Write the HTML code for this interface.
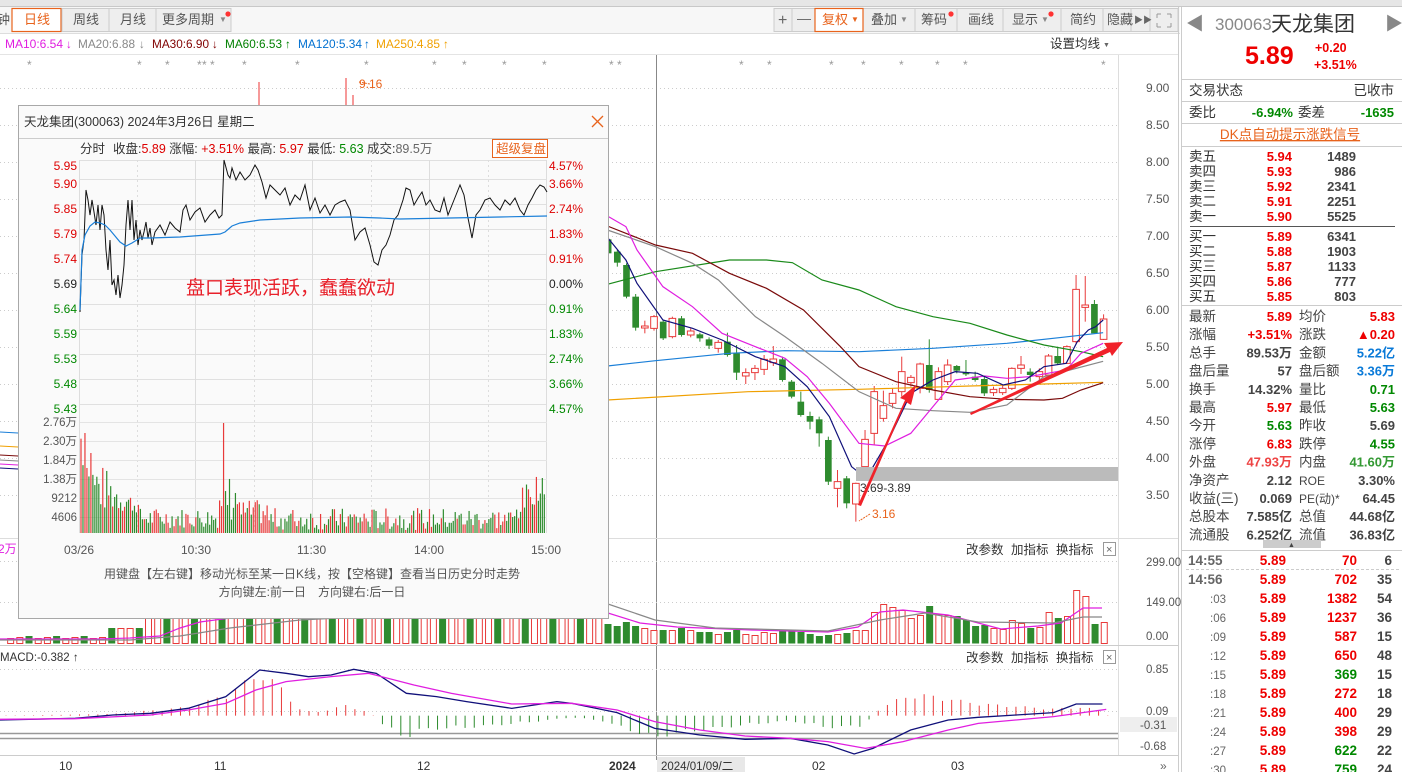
<!DOCTYPE html>
<html><head><meta charset="utf-8"><style>
html,body{margin:0;padding:0;background:#fff;width:1402px;height:772px;overflow:hidden}
svg text{font-family:"Liberation Sans","Noto Sans CJK SC",sans-serif}
</style></head><body>
<svg id="s" width="1402" height="772" viewBox="0 0 1402 772" xmlns="http://www.w3.org/2000/svg">
<rect width="1402" height="772" fill="#fff"/>
<rect x="0" y="0" width="1180" height="6" fill="#e6e6e6"/>
<rect x="1180" y="0" width="222" height="6" fill="#e6e6e6"/>
<line x1="0" y1="6.5" x2="1402" y2="6.5" stroke="#c8c8c8"/>
<rect x="0" y="7" width="1180" height="26" fill="#f7f7f7"/>
<line x1="0" y1="33.5" x2="1180" y2="33.5" stroke="#ddd"/>
<g font-size="13" fill="#555">
<text x="-3" y="24">钟</text>
<rect x="12" y="8.5" width="49" height="23" fill="#fff" stroke="#e8631c" stroke-width="1.2"/>
<text x="24" y="24" fill="#e8631c">日线</text>
<rect x="62" y="8.5" width="47" height="23" fill="#eee" stroke="#ccc"/><text x="73" y="24">周线</text>
<rect x="109" y="8.5" width="47" height="23" fill="#eee" stroke="#ccc"/><text x="120" y="24">月线</text>
<rect x="156" y="8.5" width="75" height="23" fill="#eee" stroke="#ccc"/><text x="162" y="24">更多周期</text>
<text x="219" y="22" font-size="8" fill="#888">▼</text><circle cx="228" cy="14" r="2.6" fill="#f33"/>
<rect x="774" y="8.5" width="357" height="23" fill="#eee" stroke="#ccc"/>
<text x="778" y="25" font-size="16" fill="#666">+</text><line x1="792" y1="9" x2="792" y2="31" stroke="#ccc"/>
<text x="797" y="23" font-size="14" fill="#666">—</text>
<rect x="815" y="8.5" width="48" height="23" fill="#fff" stroke="#e8631c" stroke-width="1.2"/>
<text x="822" y="24" fill="#e8631c">复权</text><text x="851" y="22" font-size="8" fill="#e8631c">▼</text>
<line x1="915" y1="9" x2="915" y2="31" stroke="#ccc"/><line x1="957" y1="9" x2="957" y2="31" stroke="#ccc"/>
<line x1="1003" y1="9" x2="1003" y2="31" stroke="#ccc"/><line x1="1061" y1="9" x2="1061" y2="31" stroke="#ccc"/>
<line x1="1103" y1="9" x2="1103" y2="31" stroke="#ccc"/>
<rect x="1131" y="8.5" width="47" height="23" fill="#eee" stroke="#ccc"/>
<line x1="1150" y1="9" x2="1150" y2="31" stroke="#ccc"/>
<text x="871" y="24">叠加</text><text x="900" y="22" font-size="8" fill="#888">▼</text>
<text x="921" y="24">筹码</text><circle cx="951" cy="14" r="2.6" fill="#f33"/>
<text x="968" y="24">画线</text>
<text x="1012" y="24">显示</text><text x="1041" y="22" font-size="8" fill="#888">▼</text><circle cx="1051" cy="14" r="2.6" fill="#f33"/>
<text x="1070" y="24">简约</text>
<text x="1107" y="24">隐藏</text><text x="1134" y="23" font-size="9" fill="#666">▶▶</text>
<g stroke="#999" stroke-width="1" fill="none"><path d="M1157 14h4M1157 14v4M1171 14h-4M1171 14v4M1157 27h4M1157 27v-4M1171 27h-4M1171 27v-4"/></g>
</g>
<g font-size="11.5" font-family="Liberation Mono">
<text x="5" y="48" fill="#e01ee0" textLength="58" lengthAdjust="spacingAndGlyphs">MA10:6.54</text><text x="66" y="48" fill="#e01ee0">↓</text>
<text x="78" y="48" fill="#888" textLength="57" lengthAdjust="spacingAndGlyphs">MA20:6.88</text><text x="139" y="48" fill="#888">↓</text>
<text x="152" y="48" fill="#800000" textLength="57" lengthAdjust="spacingAndGlyphs">MA30:6.90</text><text x="212" y="48" fill="#800000">↓</text>
<text x="225" y="48" fill="#008000" textLength="57" lengthAdjust="spacingAndGlyphs">MA60:6.53</text><text x="285" y="48" fill="#008000">↑</text>
<text x="298" y="48" fill="#0070d0" textLength="64" lengthAdjust="spacingAndGlyphs">MA120:5.34</text><text x="364" y="48" fill="#0070d0">↑</text>
<text x="376" y="48" fill="#f0a000" textLength="64" lengthAdjust="spacingAndGlyphs">MA250:4.85</text><text x="443" y="48" fill="#f0a000">↑</text>
</g>
<text x="1050" y="48" font-size="12.5" fill="#333">设置均线</text><text x="1103" y="47" font-size="7" fill="#666">▼</text>
<line x1="0" y1="54.5" x2="1178" y2="54.5" stroke="#e4e4e4"/>
<line x1="1118.5" y1="55" x2="1118.5" y2="540" stroke="#ddd"/>
<line x1="1178.5" y1="7" x2="1178.5" y2="772" stroke="#ccc"/>
<line x1="1181.5" y1="7" x2="1181.5" y2="772" stroke="#ccc"/>
<g id="pgrid" stroke="#ccc" stroke-dasharray="1,3"></g>
<g id="plabels" font-size="12" fill="#555" font-family="Liberation Mono"></g>
<g font-size="12" fill="#999" id="stars"></g>
<line x1="656.5" y1="55" x2="656.5" y2="760" stroke="#888"/>
<g id="main"></g>
<rect x="856" y="467" width="262" height="14" fill="#bbb"/>
<text x="860" y="492" font-size="12" fill="#333" font-family="Liberation Mono">3.69-3.89</text>
<text x="872" y="518" font-size="12" fill="#e8631c" font-family="Liberation Mono">3.16</text>
<path d="M870 514 L859 521" stroke="#e8631c" stroke-dasharray="2,1"/>
<path d="M359 82 L370 84" stroke="#e8631c" stroke-dasharray="2,1"/>
<text x="359" y="88" font-size="12" fill="#e8631c" font-family="Liberation Mono">9.16</text>
<line x1="346" y1="78" x2="346" y2="105" stroke="#e33"/><line x1="353" y1="95" x2="353" y2="105" stroke="#e33"/>
<line x1="259" y1="82" x2="259" y2="105" stroke="#e33"/>
<g fill="#f0222a">
<polygon points="858,505 861,506 906,402 911,405 916,385 900,398 905,400"/>
<polygon points="970,413 971,415 1110,352 1112,356 1123,342 1104,343 1107,348"/>
</g>
<line x1="0" y1="538.5" x2="1178" y2="538.5" stroke="#ddd"/>
<line x1="1118.5" y1="540" x2="1118.5" y2="645" stroke="#ddd"/>
<g font-size="12.5" fill="#333"><text x="966" y="554">改参数</text><text x="1011" y="554">加指标</text><text x="1056" y="554">换指标</text>
<text x="966" y="662">改参数</text><text x="1011" y="662">加指标</text><text x="1056" y="662">换指标</text></g>
<rect x="1103.5" y="542.5" width="12" height="13" fill="#fff" stroke="#999"/><text x="1106" y="553" font-size="11" fill="#666">×</text>
<rect x="1103.5" y="650.5" width="12" height="13" fill="#fff" stroke="#999"/><text x="1106" y="661" font-size="11" fill="#666">×</text>
<g stroke="#ccc" stroke-dasharray="1,3"><line x1="0" y1="561.5" x2="1118" y2="561.5"/><line x1="0" y1="602.5" x2="1118" y2="602.5"/></g>
<g font-size="11.5" fill="#555" font-family="Liberation Mono"><text x="1146" y="566">299.00</text><text x="1146" y="606">149.00</text><text x="1146" y="640">0.00</text></g>
<text x="-2" y="553" font-size="12" fill="#e01ee0">2万</text>
<g id="vol"></g>
<line x1="0" y1="645.5" x2="1178" y2="645.5" stroke="#ccc"/>
<line x1="1118.5" y1="646" x2="1118.5" y2="755" stroke="#ddd"/>
<text x="0" y="661" font-size="11.5" fill="#333" font-family="Liberation Mono">MACD:-0.382 ↑</text>
<g stroke="#ccc" stroke-dasharray="1,3"><line x1="0" y1="669.5" x2="1118" y2="669.5"/><line x1="0" y1="711.5" x2="1118" y2="711.5"/></g>
<line x1="0" y1="733.5" x2="1118" y2="733.5" stroke="#999" stroke-width="1.5"/>
<line x1="0" y1="738.5" x2="1118" y2="738.5" stroke="#999" stroke-width="1.5"/>
<rect x="1120" y="717" width="57" height="15" fill="#eee"/>
<g font-size="11.5" fill="#555" font-family="Liberation Mono"><text x="1146" y="673">0.85</text><text x="1146" y="715">0.09</text><text x="1140" y="729">-0.31</text><text x="1140" y="750">-0.68</text></g>
<g id="macd"></g>
<line x1="0" y1="755.5" x2="1178" y2="755.5" stroke="#ccc"/>
<g font-size="12" fill="#333" font-family="Liberation Mono">
<text x="59" y="770">10</text><text x="214" y="770">11</text><text x="417" y="770">12</text>
<text x="609" y="770" font-weight="bold">2024</text>
<text x="812" y="770">02</text><text x="951" y="770">03</text>
</g>
<rect x="657" y="757" width="88" height="15" fill="#e8e8e8"/>
<text x="661" y="770" font-size="11.5" fill="#333" font-family="Liberation Mono">2024/01/09/二</text>
<text x="1160" y="770" font-size="12" fill="#666">»</text>

<rect x="18.5" y="105.5" width="590" height="513" fill="#fafafa" stroke="#a8a8a8"/>
<line x1="19" y1="138.5" x2="608" y2="138.5" stroke="#ccc"/>
<text x="24" y="126" font-size="12.5" fill="#333">天龙集团(300063) 2024年3月26日 星期二</text>
<path d="M592 116 L603 127 M603 116 L592 127" stroke="#e8631c" stroke-width="1.3"/>
<g font-size="12.5" fill="#333">
<text x="80" y="153">分时</text>
<text x="113" y="153">收盘:<tspan fill="#d00">5.89</tspan> 涨幅: <tspan fill="#d00">+3.51%</tspan> 最高: <tspan fill="#d00">5.97</tspan> 最低: <tspan fill="#080">5.63</tspan> 成交:<tspan fill="#666">89.5万</tspan></text>
</g>
<rect x="492.5" y="139.5" width="55" height="18" fill="#fff" stroke="#e8631c"/>
<text x="496" y="153" font-size="12.5" fill="#e8631c">超级复盘</text>
<g id="pop"></g>
<text x="186" y="294" font-size="19" fill="#e8202a">盘口表现活跃，蠢蠢欲动</text>
<g font-size="12" fill="#555" font-family="Liberation Mono">
<text x="64" y="554">03/26</text><text x="181" y="554">10:30</text><text x="297" y="554">11:30</text><text x="414" y="554">14:00</text><text x="531" y="554">15:00</text>
</g>
<text x="312" y="578" font-size="12" fill="#555" text-anchor="middle">用键盘【左右键】移动光标至某一日K线，按【空格键】查看当日历史分时走势</text>
<text x="312" y="596" font-size="12" fill="#555" text-anchor="middle">方向键左:前一日　方向键右:后一日</text>

<g>
<text x="1186" y="30" font-size="18" fill="#888">◀</text>
<text x="1215" y="30" font-size="17" fill="#888">300063</text>
<text x="1271" y="31" font-size="21" fill="#333">天龙集团</text>
<text x="1385" y="30" font-size="18" fill="#888">▶</text>
<text x="1245" y="64" font-size="25" fill="#e00" font-weight="bold">5.89</text>
<text x="1315" y="52" font-size="12.5" fill="#e00" font-weight="bold">+0.20</text>
<text x="1314" y="69" font-size="12.5" fill="#e00" font-weight="bold">+3.51%</text>
<g stroke="#ccc"><line x1="1182" y1="79.5" x2="1402" y2="79.5"/><line x1="1182" y1="101.5" x2="1402" y2="101.5"/><line x1="1182" y1="123.5" x2="1402" y2="123.5"/><line x1="1182" y1="146.5" x2="1402" y2="146.5"/><line x1="1182" y1="305.5" x2="1402" y2="305.5"/></g>
<line x1="1190" y1="226.5" x2="1395" y2="226.5" stroke="#555"/>
<g font-size="13.5" fill="#333">
<text x="1189" y="95">交易状态</text><text x="1394" y="95" text-anchor="end">已收市</text>
<text x="1189" y="117">委比</text><text x="1293" y="117" text-anchor="end" fill="#080" font-weight="bold" font-size="13">-6.94%</text>
<text x="1298" y="117">委差</text><text x="1394" y="117" text-anchor="end" fill="#080" font-weight="bold" font-size="13">-1635</text>
<text x="1290" y="139" text-anchor="middle" fill="#e8631c" text-decoration="underline">DK点自动提示涨跌信号</text>
</g>
<g id="book" font-size="13.5"></g>
<g id="stats" font-size="13.5"></g>
<rect x="1263" y="540" width="58" height="8" fill="#ccc"/><text x="1288" y="547" font-size="7" fill="#444">▲</text>
<line x1="1182" y1="550.5" x2="1402" y2="550.5" stroke="#ccc"/>
<line x1="1186" y1="569.5" x2="1400" y2="569.5" stroke="#ccc" stroke-dasharray="3,2"/>
<g id="ticks" font-size="13.5" font-weight="bold"></g>
</g>
</svg>
<script>
(function(){
var NS="http://www.w3.org/2000/svg";
function el(p,t,a,txt){var e=document.createElementNS(NS,t);for(var k in a)e.setAttribute(k,a[k]);if(txt!=null)e.textContent=txt;p.appendChild(e);return e;}
function $(i){return document.getElementById(i);}
var pl=["9.00","8.50","8.00","7.50","7.00","6.50","6.00","5.50","5.00","4.50","4.00","3.50"];
for(var i=0;i<pl.length;i++){var y=88+i*37;el($("pgrid"),"line",{x1:0,y1:y+.5,x2:1118,y2:y+.5});el($("plabels"),"text",{x:1146,y:y+4},pl[i]);}
var sx=[30,140,168,200,205,213,245,298,367,435,465,505,545,612,620,742,770,832,864,902,938,966,1104];
sx.forEach(function(x){el($("stars"),"text",{x:x-3,y:69},"*");});
var g=el($("main"),"g",{transform:"translate(600,200) scale(0.36996,0.33333)"});
var C=[[118,160,110,165,"g"],[155,188,150,200,"g"],[195,290,190,295,"g"],[290,383,282,392,"g"],[378,384,362,400,"r"],[350,385,345,392,"r"],[365,415,360,420,"g"],[355,410,350,415,"r"],[355,405,348,410,"g"],[393,405,385,412,"r"],[403,415,398,425,"g"],[418,437,412,447,"g"],[427,445,420,458,"r"],[425,465,398,470,"g"],[460,518,435,540,"g"],[518,528,505,552,"r"],[505,518,495,540,"r"],[478,508,465,525,"r"],[477,488,438,498,"r"],[478,540,470,545,"g"],[545,590,540,595,"g"],[605,645,575,650,"g"],[648,665,635,688,"g"],[658,700,650,740,"g"],[720,845,710,855,"g"],[845,865,810,922,"r"],[835,910,828,925,"g"],[850,912,848,965,"r"],[718,800,690,800,"r"],[575,700,558,735,"r"],[617,655,572,665,"r"],[580,610,565,625,"r"],[515,575,470,590,"r"],[532,548,525,560,"r"],[492,565,488,580,"r"],[495,570,418,578,"g"],[515,598,502,600,"r"],[495,545,478,555,"r"],[498,512,495,520,"g"],[517,523,480,528,"g"],[530,540,515,545,"g"],[537,580,530,588,"g"],[568,578,560,588,"r"],[565,578,555,585,"r"],[505,565,502,570,"r"],[495,505,468,522,"r"],[515,525,505,545,"g"],[515,530,505,540,"r"],[468,525,462,530,"r"],[468,490,440,495,"g"],[440,490,436,492,"r"],[268,425,225,430,"r"],[315,322,228,365,"r"],[312,400,300,402,"g"],[357,418,343,420,"r"]];
function cx(i){return 22+i*24.8;}
C.forEach(function(c,i){var x=cx(i),col=c[4]=="r"?"#e83a3a":"#2e8b2e";
el(g,"line",{x1:x,y1:c[2],x2:x,y2:c[3],stroke:col,"stroke-width":1,"vector-effect":"non-scaling-stroke"});
var h=Math.max(c[1]-c[0],3);
if(c[4]=="r")el(g,"rect",{x:x-9,y:c[0],width:18,height:h,fill:"#fff",stroke:col,"stroke-width":1,"vector-effect":"non-scaling-stroke"});
else el(g,"rect",{x:x-9,y:c[0],width:18,height:h,fill:col});});
var L=[["#f0a000","20,600 400,575 700,568 1000,558 1200,552 1360,547"],
["#1a7fd8","20,498 150,482 350,460 500,452 700,455 900,445 1100,430 1250,412 1360,398"],
["#1a8a1a","20,253 150,215 350,180 450,180 520,188 600,240 700,270 800,320 900,350 1000,370 1100,405 1200,435 1300,455 1360,470"],
["#7a0a0a","20,78 150,135 250,160 350,220 450,265 550,330 650,440 700,500 800,545 900,570 1000,590 1100,598 1200,600 1250,595 1300,570 1360,548"],
["#888","20,90 150,140 250,190 320,240 420,350 500,410 550,450 600,490 700,575 800,625 900,632 1000,637 1100,615 1200,530 1270,510 1360,484"],
["#e01ee0","20,48 70,80 100,150 170,260 250,320 330,400 420,440 500,475 560,530 620,610 700,730 770,738 840,700 900,620 960,540 1040,528 1100,535 1160,530 1260,510 1300,460 1360,430"],
["#10107a","20,112 70,180 100,250 170,360 250,385 330,420 420,470 500,500 560,560 620,650 680,800 720,835 780,720 840,580 900,540 960,515 1020,520 1090,555 1150,540 1200,500 1260,490 1290,425 1320,390 1340,380 1360,360"]];
L.forEach(function(l){el(g,"polyline",{points:l[1],fill:"none",stroke:l[0],"stroke-width":1.2,"vector-effect":"non-scaling-stroke"});});
[["#1a7fd8",432],["#f0a000",446],["#7a0a0a",455],["#888",460],["#e01ee0",464],["#10107a",468]].forEach(function(a){el($("main"),"line",{x1:0,y1:a[1],x2:18,y2:a[1]+1,stroke:a[0]});});
var VT=[624,626,622,626,628,630,630,630,628,630,632,632,634,632,630,634,635,632,633,631,630,632,634,636,635,634,633,630,630,612,604,607,610,618,615,606,614,615,616,620,626,625,628,629,620,623,628,627,612,618,616,590,596,624,622];
var vg=$("vol");
function bar(x,tp,red){if(red)el(vg,"rect",{x:x-3,y:tp+.5,width:6,height:643-tp,fill:"#fff",stroke:"#e83a3a"});else el(vg,"rect",{x:x-3.5,y:tp,width:7,height:643.5-tp,fill:"#2e8b2e"});}
C.forEach(function(c,i){bar(608+i*9.19,VT[i],c[4]=="r");});
for(var k=1;k<66;k++){var bx=608-k*9.19;var tp=bx<105?(636+(k%3)):(bx<140?628:600);bar(bx,tp,(k*7)%3!=0);}
el(vg,"polyline",{points:"0,639 100,639 130,638 160,636 180,628 200,622 230,618 608,613 640,623 677,627 752,630 828,632 858,627 880,612 903,610 948,615 1001,629 1038,626 1061,623 1083,608 1102,608",fill:"none",stroke:"#e01ee0","stroke-width":1.2});
el(vg,"polyline",{points:"0,640 130,640 180,636 230,628 300,620 608,604 655,620 715,628 828,631 880,620 925,613 978,622 1053,623 1083,617 1102,617",fill:"none",stroke:"#888","stroke-width":1.2});
var mg=el($("macd"),"g",{transform:"translate(0,530) scale(0.75255,0.33333)"});
var K=[[0,0],[150,5],[250,25],[300,60],[345,125],[370,90],[400,15],[420,10],[460,30],[490,10],[500,-5],[510,-30],[540,-65],[560,-40],[620,-35],[700,-20],[740,-10],[760,-5],[800,-15],[840,-45],[870,-65],[900,-50],[1000,-25],[1050,-15],[1100,-35],[1150,-30],[1160,10],[1200,55],[1230,60],[1300,35],[1400,20],[1440,25],[1470,10]];
function hk(x){for(var i=0;i<K.length-1;i++){if(x>=K[i][0]&&x<=K[i+1][0]){var t=(x-K[i][0])/(K[i+1][0]-K[i][0]);return K[i][1]+t*(K[i+1][1]-K[i][1]);}}return 0;}
for(var mx=8;mx<1475;mx+=12.2){var h=hk(mx)*(0.8+0.3*Math.abs(Math.sin(mx*0.7)));if(Math.abs(h)<1)h=h<0?-1:1;
el(mg,"line",{x1:mx,y1:557,x2:mx,y2:557-h,stroke:h>0?"#e83a3a":"#2e8b2e","stroke-width":1,"vector-effect":"non-scaling-stroke"});}
el(mg,"polyline",{points:"0,570 100,565 150,555 200,550 250,535 300,500 345,420 380,430 410,440 440,435 470,418 500,430 540,490 580,500 620,515 680,535 740,515 760,520 820,548 870,595 930,615 990,628 1050,625 1100,645 1135,672 1160,655 1210,600 1260,570 1300,562 1350,555 1400,548 1430,522 1465,522",fill:"none",stroke:"#10107a","stroke-width":1.3,"vector-effect":"non-scaling-stroke"});
el(mg,"polyline",{points:"0,568 100,566 200,555 250,540 300,520 340,480 380,455 440,440 490,430 550,465 600,490 680,522 760,520 820,540 870,575 930,600 990,618 1050,625 1100,635 1150,655 1200,635 1260,600 1300,580 1400,560 1470,538",fill:"none",stroke:"#e01ee0","stroke-width":1.3,"vector-effect":"non-scaling-stroke"});
var pg=$("pop");
var rows=[["5.95","4.57%","#d00",166],["5.90","3.66%","#d00",184],["5.85","2.74%","#d00",209],["5.79","1.83%","#d00",234],["5.74","0.91%","#d00",259],["5.69","0.00%","#222",284],["5.64","0.91%","#080",309],["5.59","1.83%","#080",334],["5.53","2.74%","#080",359],["5.48","3.66%","#080",384],["5.43","4.57%","#080",409]];
rows.forEach(function(r,i){if(i>0)el(pg,"line",{x1:80,y1:r[3]-4.5,x2:547,y2:r[3]-4.5,stroke:"#e0e0e0"});
el(pg,"text",{x:77,y:r[3]+4,"text-anchor":"end","font-size":12,fill:r[2],"font-family":"Liberation Mono"},r[0]);
el(pg,"text",{x:549,y:r[3]+4,"font-size":12,fill:r[2],"font-family":"Liberation Mono"},r[1]);});
el(pg,"line",{x1:80,y1:160.5,x2:547,y2:160.5,stroke:"#e0e0e0"});
[79,137,195,254,312,371,429,488,546].forEach(function(x,i){var a={x1:x+.5,y1:160,x2:x+.5,y2:533,stroke:"#ddd"};if(i%2)a["stroke-dasharray"]="2,3";el(pg,"line",a);});
[422,441,460,479,498,517].forEach(function(y){el(pg,"line",{x1:80,y1:y+.5,x2:547,y2:y+.5,stroke:"#e4e4e4"});});
var vl=["2.76万","2.30万","1.84万","1.38万","9212","4606"];
vl.forEach(function(t,i){el(pg,"text",{x:77,y:426+i*19,"text-anchor":"end","font-size":11.5,fill:"#555","font-family":"Liberation Mono"},t);});
el(pg,"polyline",{points:"80,312 82,255 84,240 86,190 88,200 90,215 92,200 94,212 96,225 98,205 100,230 102,205 104,215 106,250 108,270 110,240 112,285 114,280 116,295 118,275 120,298 122,285 124,265 126,225 128,200 130,230 132,200 134,240 136,220 138,245 140,230 142,240 144,232 146,222 148,238 150,228 152,245 155,232 160,225 165,235 170,222 175,228 180,232 183,210 186,205 190,220 195,212 200,208 205,222 210,215 215,210 219,218 222,215 224,160 228,175 230,178 232,168 236,180 240,172 245,180 250,175 255,165 258,170 262,182 266,198 270,185 275,190 280,195 285,188 290,205 295,195 300,200 305,185 310,210 315,198 320,213 325,205 330,215 335,205 340,202 345,200 350,210 355,240 360,232 365,228 370,245 374,262 378,265 382,250 386,245 390,235 394,220 398,215 403,200 406,188 410,190 414,205 418,198 422,192 426,205 430,200 435,210 440,212 444,198 448,215 452,205 456,195 460,185 464,195 468,218 472,238 476,215 480,210 485,200 490,198 495,205 500,210 505,200 510,205 515,198 520,210 524,215 528,205 532,198 536,190 540,185 544,187 547,192",fill:"none",stroke:"#111","stroke-width":1});
el(pg,"polyline",{points:"80,310 82,250 85,235 90,226 95,222 100,223 105,225 110,230 115,236 120,242 126,246 132,243 140,238 150,238 180,237 220,234 225,232 232,226 240,223 260,220 300,218 350,217 380,218 400,219 450,218 500,217 547,216",fill:"none",stroke:"#1a7fd8","stroke-width":1.2});
var seed=7;function rnd(){seed=(seed*9301+49297)%233280;return seed/233280;}
for(var i2=0;i2<235;i2++){var px=81+i2*1.98;var ph;
if(i2<30)ph=20+rnd()*70*(1-i2/35)+(i2<4?40:0);else if(i2<70)ph=5+rnd()*20;else if(i2==72)ph=110;else if(i2<80)ph=10+rnd()*50;else if(i2<95)ph=8+rnd()*25;else if(i2<220)ph=3+rnd()*22;else ph=10+rnd()*30+(i2-220)*2;
if(i2==2)ph=100;if(i2==5)ph=80;if(i2==233)ph=55;
el(pg,"line",{x1:px,y1:533,x2:px,y2:533-Math.min(ph,110),stroke:rnd()>0.5?"#e83a3a":"#2e8b2e","stroke-width":1.2});}
var bk=[["卖五","5.94","1489"],["卖四","5.93","986"],["卖三","5.92","2341"],["卖二","5.91","2251"],["卖一","5.90","5525"],["买一","5.89","6341"],["买二","5.88","1903"],["买三","5.87","1133"],["买四","5.86","777"],["买五","5.85","803"]];
bk.forEach(function(b,i){var y=161+i*15+(i>=5?5:0);el($("book"),"text",{x:1189,y:y,fill:"#333"},b[0]);
el($("book"),"text",{x:1292,y:y,"text-anchor":"end",fill:"#e00","font-weight":"bold","font-size":13},b[1]);
el($("book"),"text",{x:1356,y:y,"text-anchor":"end",fill:"#444","font-weight":"bold","font-size":13},b[2]);});
var st=[["最新","5.89","#e00","均价","5.83","#e00"],["涨幅","+3.51%","#e00","涨跌","▲0.20","#e00"],["总手","89.53万","#444","金额","5.22亿","#0a7ad8"],["盘后量","57","#444","盘后额","3.36万","#0a7ad8"],["换手","14.32%","#444","量比","0.71","#080"],["最高","5.97","#e00","最低","5.63","#080"],["今开","5.63","#080","昨收","5.69","#444"],["涨停","6.83","#e00","跌停","4.55","#080"],["外盘","47.93万","#e44","内盘","41.60万","#393"],["净资产","2.12","#444","ROE","3.30%","#444"],["收益(三)","0.069","#444","PE(动)*","64.45","#444"],["总股本","7.585亿","#444","总值","44.68亿","#444"],["流通股","6.252亿","#444","流值","36.83亿","#444"]];
st.forEach(function(s,i){var y=321+i*18.2;var p=$("stats");
el(p,"text",{x:1189,y:y,fill:"#444"},s[0]);el(p,"text",{x:1292,y:y,"text-anchor":"end",fill:s[2],"font-weight":"bold","font-size":13},s[1]);
el(p,"text",{x:1299,y:y,fill:"#444","font-size":i>=9&&i<=10?12:13.5},s[3]);el(p,"text",{x:1395,y:y,"text-anchor":"end",fill:s[5],"font-weight":"bold","font-size":13},s[4]);});
var tk=[["14:55","70","#e00","6",565],["14:56","702","#e00","35",584],[":03","1382","#e00","54",603],[":06","1237","#e00","36",622],[":09","587","#e00","15",641],[":12","650","#e00","48",660],[":15","369","#080","15",679],[":18","272","#e00","18",698],[":21","400","#e00","29",717],[":24","398","#e00","29",736],[":27","622","#080","22",755],[":30","759","#080","24",774]];
tk.forEach(function(t){var p=$("ticks");var big=t[0].length>3;
el(p,"text",{x:big?1188:1210,y:t[4],fill:"#666","font-weight":big?"bold":"normal","font-size":big?13.5:11.5},t[0]);
el(p,"text",{x:1286,y:t[4],"text-anchor":"end",fill:"#e00"},"5.89");
el(p,"text",{x:1357,y:t[4],"text-anchor":"end",fill:t[2]},t[1]);
el(p,"text",{x:1392,y:t[4],"text-anchor":"end",fill:"#444"},t[3]);});
})();
</script>
</body></html>
